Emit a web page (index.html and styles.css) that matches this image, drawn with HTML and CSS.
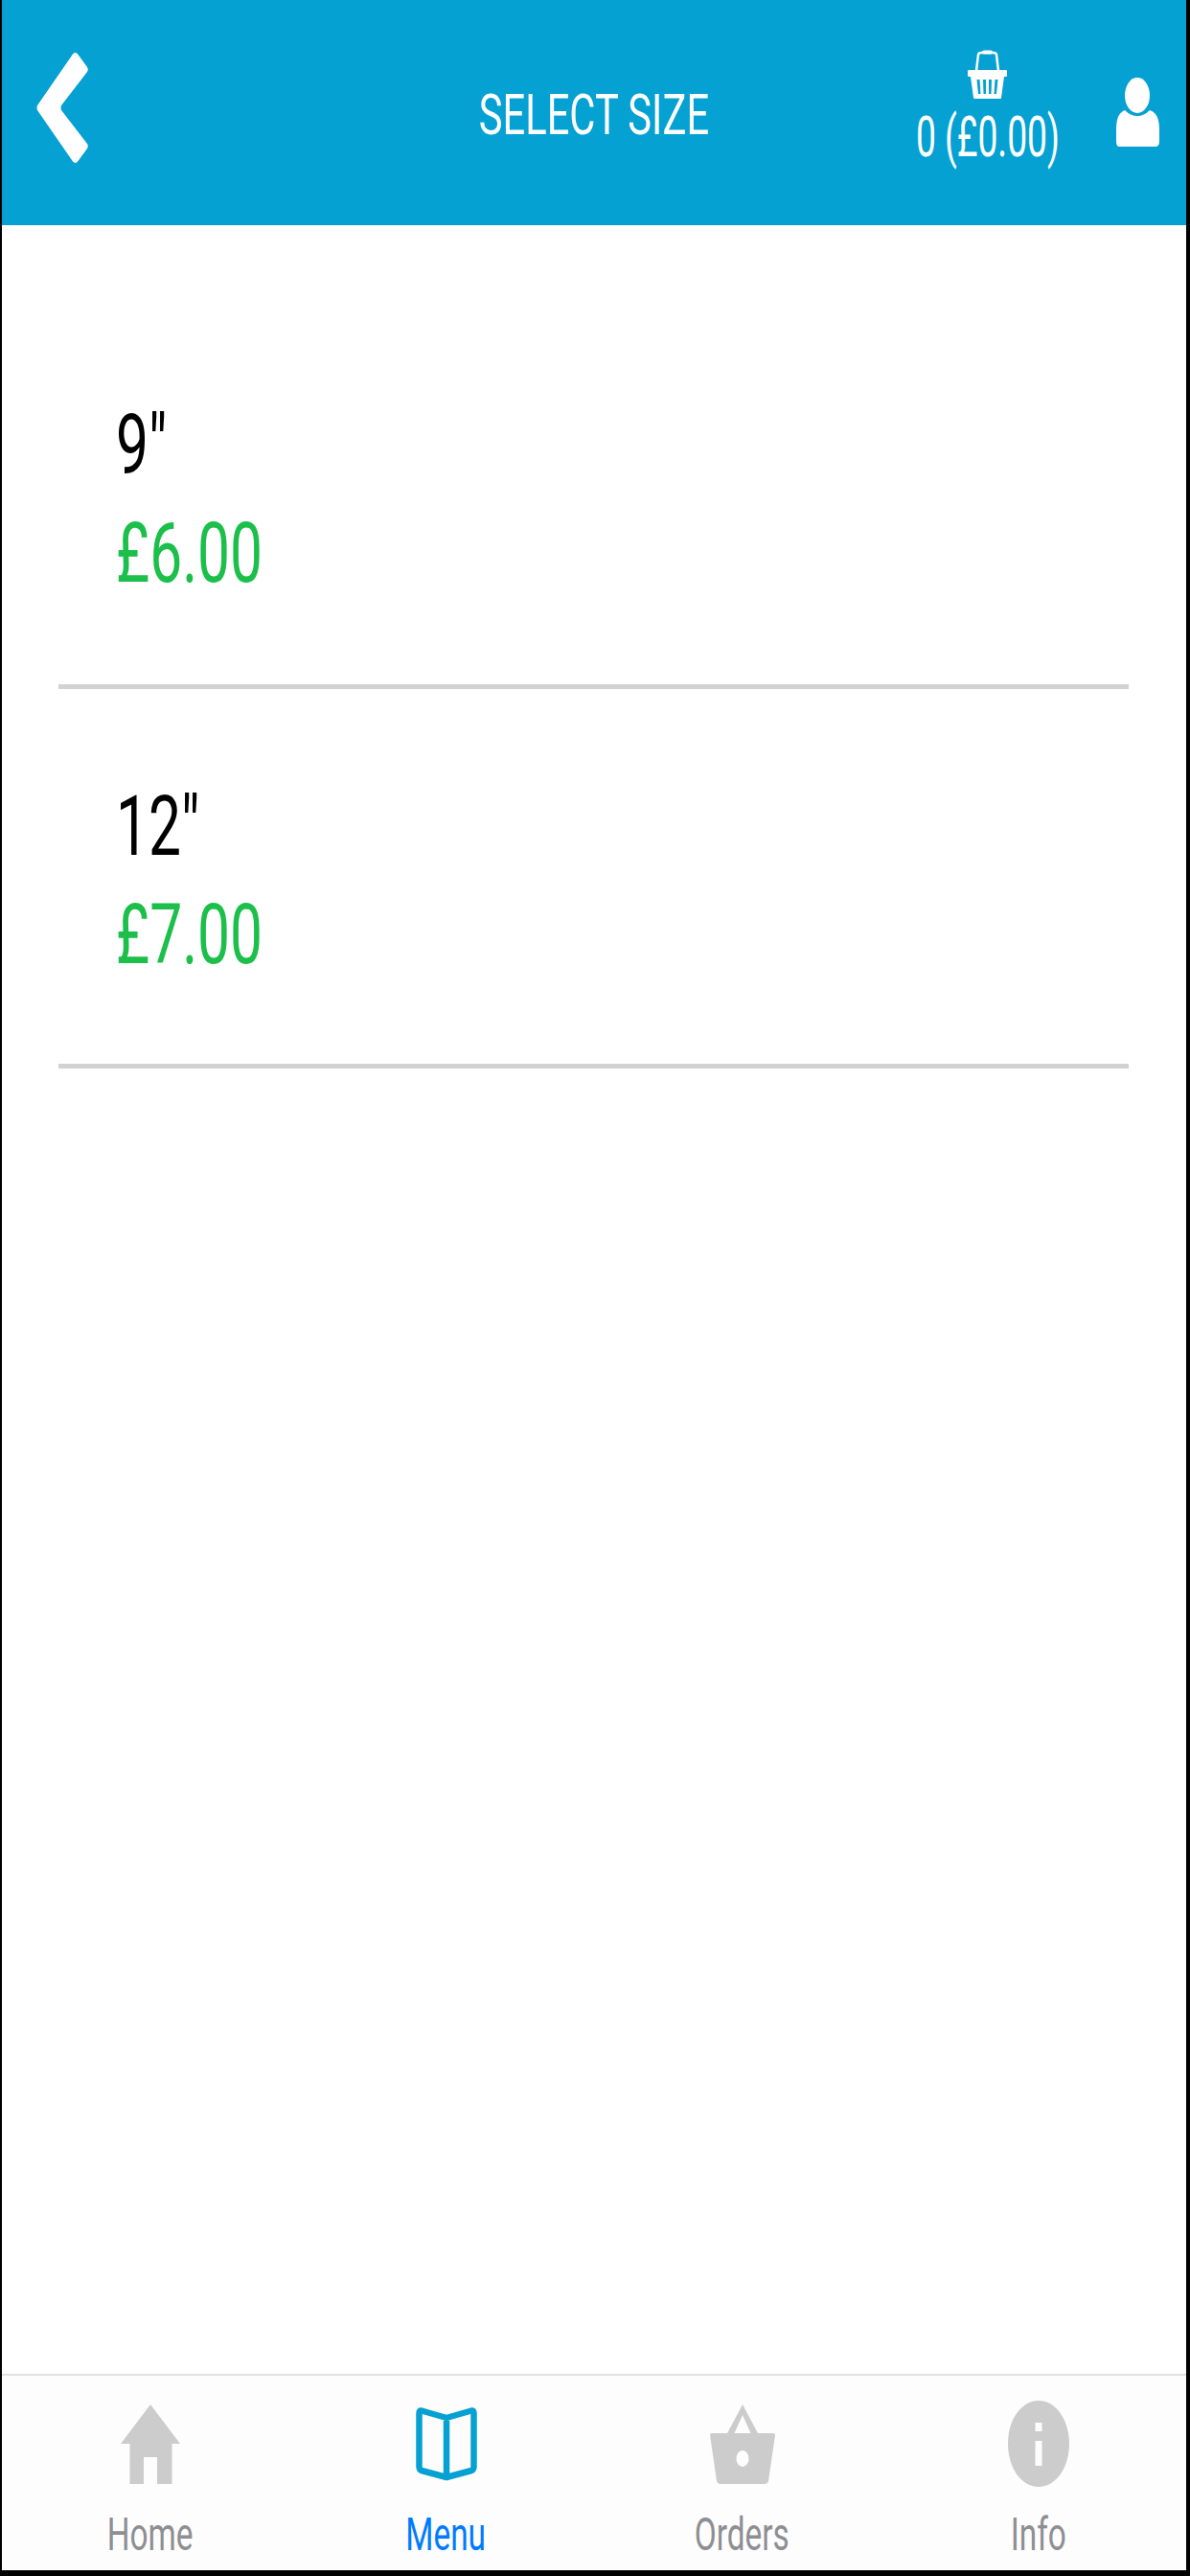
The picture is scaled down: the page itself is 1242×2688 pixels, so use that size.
FILE: index.html
```html
<!DOCTYPE html>
<html lang="en">
<head>
    <title>Select Size</title>
    <link rel="stylesheet" href="styles.css">
</head>
<body>
    <div class="app">
        <header class="topbar">
            <a class="back" aria-label="Back">
                <svg width="54" height="115" viewBox="0 0 54 115">
                    <path d="M38 1.500 Q41 -1.500 43.500 2 L53 15 Q54.500 17.500 53 20 L26 55 Q25 57.500 26 60 L53 95 Q54.500 97.500 53 100 L43.500 113 Q41 116.500 38 113.500 L1 60 Q0 57.500 1 55 Z" fill="#fff"/>
                </svg>
            </a>
            <h1 class="title"><span class="squeeze-c">SELECT SIZE</span></h1>
            <div class="actions">
                <div class="cart">
                    <svg class="basket" width="45" height="54" viewBox="0 0 45 54">
                        <path d="M11 24 L13 7 Q13.500 5 16 5 L29 5 Q31.500 5 32 7 L34 24" fill="none" stroke="#fff" stroke-width="2.500"/>
                        <rect x="17" y="2.500" width="11" height="4" rx="2" fill="#fff"/>
                        <path fill-rule="evenodd" fill="#fff" d="M3 23 H42 Q43 23 43 24 V29 Q43 30 42 30 H40 L37 52 Q37 53 36 53 H9 Q8 53 8 52 L5 30 H3 Q2 30 2 29 V24 Q2 23 3 23 Z M11.500 33 L13 48 H15.500 L14.500 33 Z M18 33 L18.500 48 H21 L21 33 Z M24 33 L24 48 H26.500 L27 33 Z M30.500 33 L29.500 48 H32 L33.500 33 Z"/>
                    </svg>
                    <div class="cart-total"><span class="squeeze-c">0 (£0.00)</span></div>
                </div>
                <svg class="user" width="54" height="80" viewBox="0 0 54 80">
                    <ellipse cx="27" cy="20.500" rx="13" ry="18.500" fill="#fff"/>
                    <path d="M14 36 Q20 42 27 42 Q34 42 40 36 Q50 39 50 56 L50 68 Q50 74 46 74 L8 74 Q5 74 5 68 L5 56 Q5 39 14 36 Z" fill="#fff"/>
                </svg>
            </div>
        </header>

        <main class="sizes">
            <div class="size-row">
                <div class="size-name"><span class="squeeze">9"</span></div>
                <div class="size-price"><span class="squeeze">£6.00</span></div>
            </div>
            <div class="size-row">
                <div class="size-name"><span class="squeeze">12"</span></div>
                <div class="size-price"><span class="squeeze">£7.00</span></div>
            </div>
        </main>

        <nav class="tabs">
            <a class="tab">
                <svg width="70" height="100" viewBox="0 0 70 100">
                    <path d="M35 9 L66 50 H57.500 V92 H42 V64 H28 V92 H13.500 V50 H4 Z" fill="#ccc"/>
                </svg>
                <span class="tab-label"><span class="squeeze-c">Home</span></span>
            </a>
            <a class="tab tab-active">
                <svg width="70" height="100" viewBox="0 0 70 100">
                    <path d="M35 23 L9 15.500 Q6.500 15 6.500 18 V74 Q6.500 77 9 78 L35 85 L61 78 Q63.500 77 63.500 74 V18 Q63.500 15 61 15.500 Z M35 23 V85" fill="none" stroke="#04a1d2" stroke-width="6.500" stroke-linejoin="round"/>
                </svg>
                <span class="tab-label"><span class="squeeze-c">Menu</span></span>
            </a>
            <a class="tab">
                <svg width="70" height="100" viewBox="0 0 70 100">
                    <path fill-rule="evenodd" fill="#ccc" d="M35 9 L51 39 H67 Q69 39 69 41 L62 89 Q61 92 58 92 H12 Q9 92 8 89 L1 41 Q1 39 3 39 H19 Z M35 20 L26.500 39 H43.500 Z M35 57 A6.500 8.500 0 1 0 35.010 57 Z"/>
                </svg>
                <span class="tab-label"><span class="squeeze-c">Orders</span></span>
            </a>
            <a class="tab">
                <svg width="70" height="100" viewBox="0 0 70 100">
                    <path fill-rule="evenodd" fill="#ccc" d="M35 5 C53 5 67 25 67 50 C67 75 53 95 35 95 C17 95 3 75 3 50 C3 25 17 5 35 5 Z M31.500 28 V37 H38.500 V28 Z M31.500 47 V73 H38.500 V47 Z"/>
                </svg>
                <span class="tab-label"><span class="squeeze-c">Info</span></span>
            </a>
        </nav>
    </div>
</body>
</html>
```

FILE: styles.css
```css
html, body {
    margin: 0;
    height: 100%;
    background-color: black;
}

body {
    padding: 0 4px 6px 2px;
    box-sizing: border-box;
    height: 2688px;
    overflow: hidden;
    font-family: Roboto, "Liberation Sans", sans-serif;
}

.app {
    display: flex;
    flex-direction: column;
    height: 100%;
    background-color: white;
}

/* text in the screenshot is stretched tall, so squeeze it sideways */
.squeeze, .squeeze-c {
    display: inline-block;
    white-space: nowrap;
    transform: scaleX(0.695);
}

.squeeze {
    transform-origin: left center;
}

.squeeze-c {
    transform-origin: center;
}

.topbar {
    display: grid;
    grid-template-columns: 1fr auto 1fr;
    height: 235px;
    flex-shrink: 0;
    padding: 0 24px;
    box-sizing: border-box;
    background-color: #04a1d2;
    color: white;
}

.back {
    margin: 55px 0 0 12px;
}

.back svg, .user, .basket, .tab svg {
    display: block;
}

.title {
    margin: 84px 0 0;
    font-size: 60px;
    font-weight: 400;
    line-height: 72px;
}

.actions {
    display: flex;
    justify-content: flex-end;
    align-items: flex-start;
    gap: 10px;
}

.cart {
    width: 240px;
    margin-top: 50px;
    text-align: center;
}

.basket {
    margin: 0 auto;
}

.cart-total {
    margin-top: 4px;
    font-size: 60px;
    line-height: 70px;
}

.cart-total .squeeze-c {
    transform: scaleX(0.62);
}

.user {
    margin-top: 79px;
}

.sizes {
    flex: 1;
    padding: 88px 60px 0 59px;
}

.size-row {
    height: 396px;
    box-sizing: border-box;
    padding: 85px 0 0 60px;
    border-bottom: 5px solid #d2d2d2;
    font-size: 87px;
    line-height: 113px;
}

.size-row + .size-row {
    padding-top: 87px;
}

.size-name {
    color: black;
}

.size-price {
    color: #1bbf4a;
}

.tabs {
    display: flex;
    height: 205px;
    flex-shrink: 0;
    box-sizing: border-box;
    border-top: 2px solid #e2e2e2;
    background-color: #fdfdfd;
}

.tab {
    flex: 1;
    display: flex;
    flex-direction: column;
    align-items: center;
    padding-top: 21px;
    color: #8e8e93;
}

.tab-label {
    margin-top: 15px;
    font-size: 48px;
    line-height: 60px;
}

.tab-active .tab-label {
    color: #007aff;
}
```
